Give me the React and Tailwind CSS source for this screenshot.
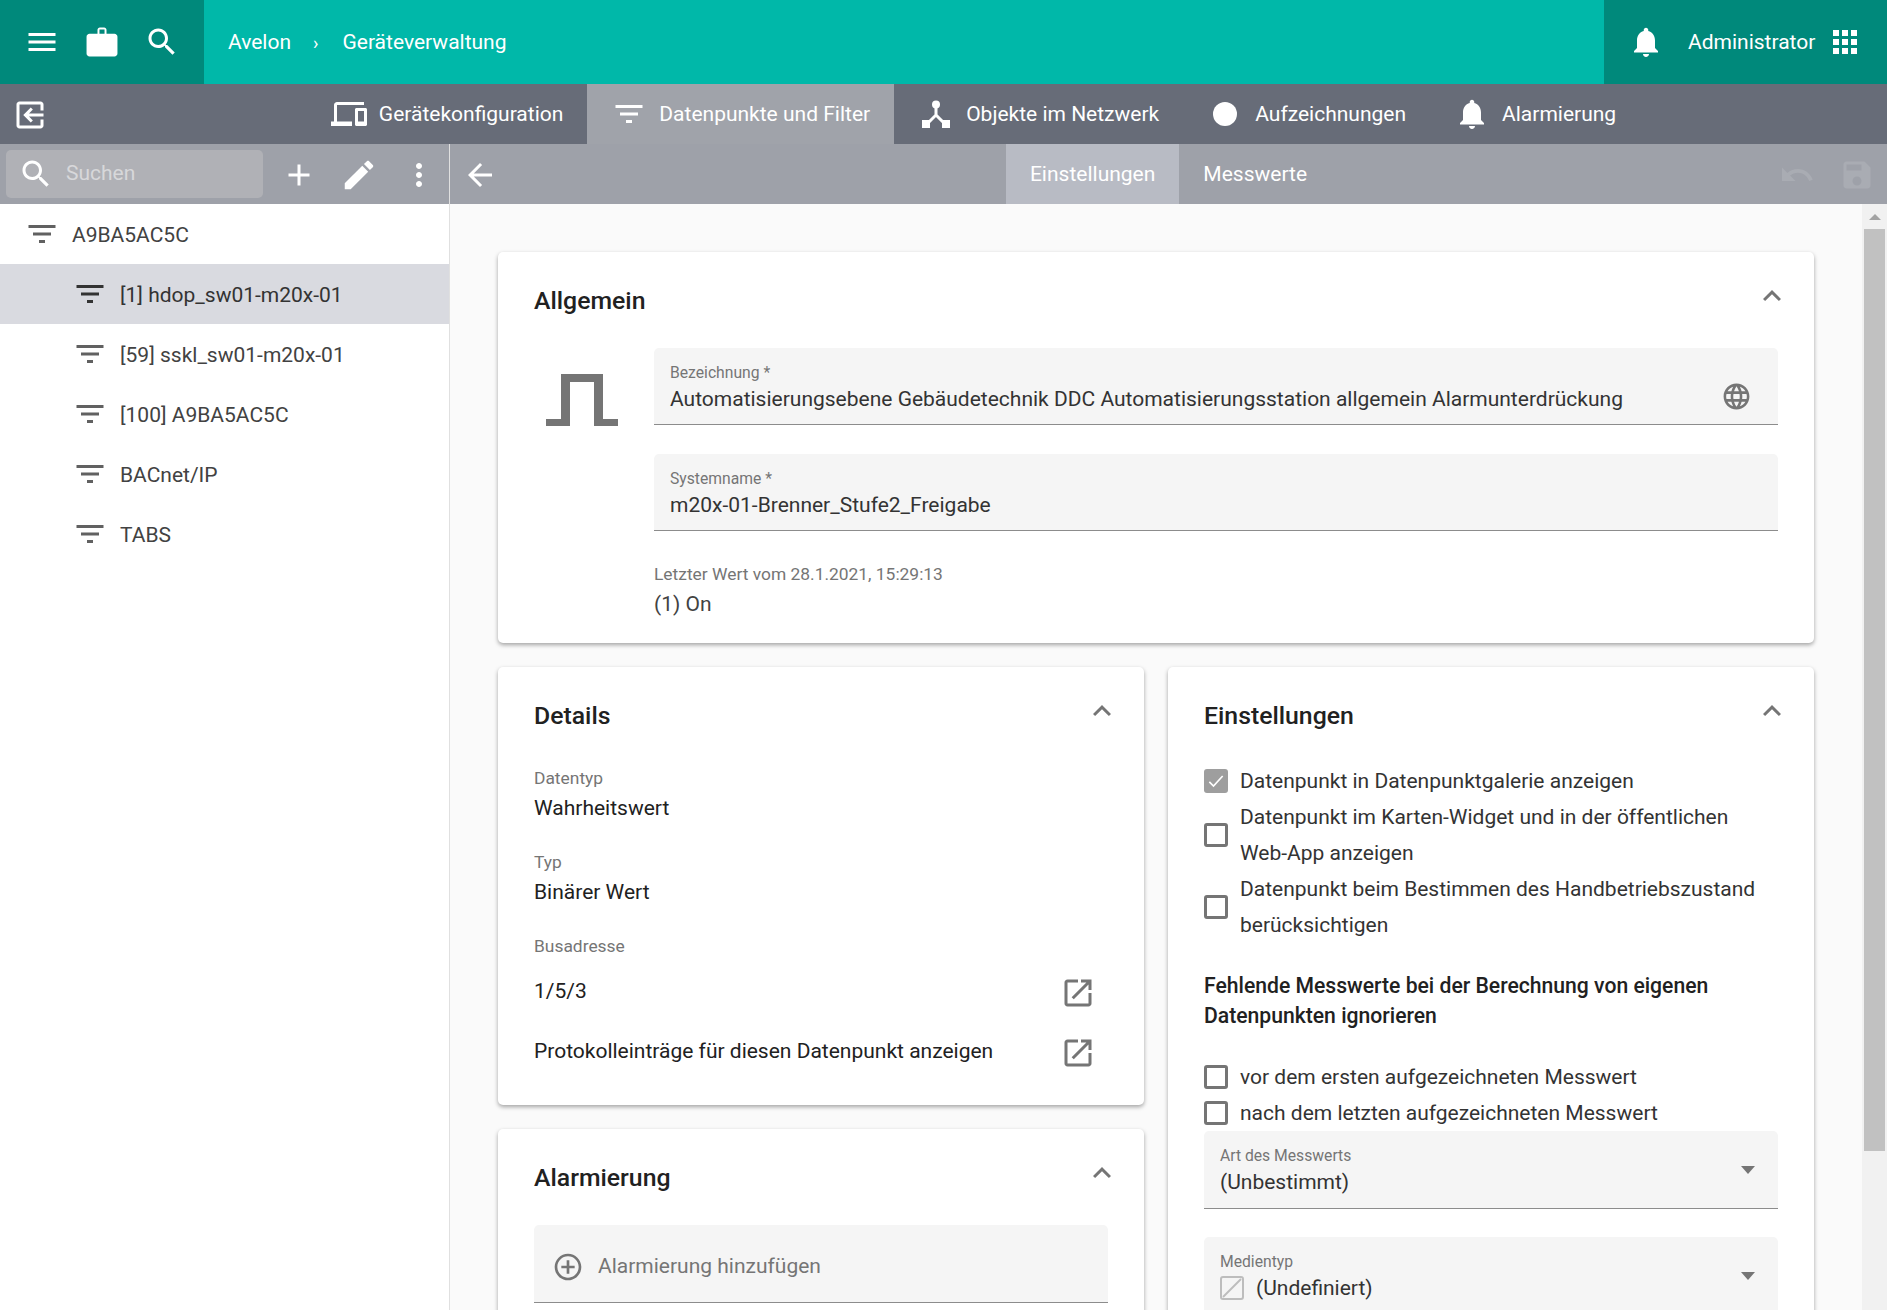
import React from "react";

const PATHS = {
  menu: "M3 18h18v-2H3v2zm0-5h18v-2H3v2zm0-7v2h18V6H3z",
  work: "M20.300 6.500H15V3.900c0-.9-.7-1.600-1.600-1.600h-2.800C9.700 2.300 9 3 9 3.900v2.600H3.700c-1.100 0-2 .9-2 2v11.200c0 1.100.9 2 2 2h16.600c1.100 0 2-.9 2-2V8.500c0-1.100-.9-2-2-2zM13.700 6.500h-3.400V3.700h3.400v2.800z",
  search: "M15.500 14h-.79l-.28-.27C15.410 12.590 16 11.110 16 9.500 16 5.910 13.090 3 9.500 3S3 5.910 3 9.500 5.910 16 9.500 16c1.610 0 3.090-.59 4.230-1.570l.27.28v.79l5 4.990L20.490 19l-4.990-5zm-6 0C7.010 14 5 11.990 5 9.500S7.010 5 9.500 5 14 7.010 14 9.500 11.990 14 9.500 14z",
  bell: "M12 22c1.100 0 2-.9 2-2h-4c0 1.100.89 2 2 2zm6-6v-5c0-3.070-1.640-5.640-4.500-6.320V4c0-.83-.67-1.500-1.500-1.500s-1.500.67-1.500 1.500v.68C7.630 5.360 6 7.920 6 11v5l-2 2v1h16v-1l-2-2z",
  apps: "M4 8h4V4H4v4zm6 12h4v-4h-4v4zm-6 0h4v-4H4v4zm0-6h4v-4H4v4zm6 0h4v-4h-4v4zm6-10v4h4V4h-4zm-6 4h4V4h-4v4zm6 6h4v-4h-4v4zm0 6h4v-4h-4v4z",
  exit: "M10.090 15.590L11.500 17l5-5-5-5-1.410 1.410L12.670 11H3v2h9.670l-2.580 2.590zM19 3H5c-1.110 0-2 .9-2 2v4h2V5h14v14H5v-4H3v4c0 1.100.89 2 2 2h14c1.100 0 2-.9 2-2V5c0-1.100-.9-2-2-2z",
  devices: "M4 6h18V4H4c-1.100 0-2 .9-2 2v11H0v3h14v-3H4V6zm19 2h-6c-.55 0-1 .45-1 1v10c0 .55.45 1 1 1h6c.55 0 1-.45 1-1V9c0-.55-.45-1-1-1zm-1 9h-4v-7h4v7z",
  filter: "M10 18h4v-2h-4v2zM3 6v2h18V6H3zm3 7h12v-2H6v2z",
  add: "M19 13h-6v6h-2v-6H5v-2h6V5h2v6h6v2z",
  edit: "M3 17.250V21h3.750L17.810 9.940l-3.750-3.750L3 17.250zM20.710 7.040c.39-.39.39-1.020 0-1.410l-2.340-2.340c-.39-.39-1.020-.39-1.410 0l-1.830 1.830 3.750 3.750 1.830-1.830z",
  more: "M12 8c1.100 0 2-.9 2-2s-.9-2-2-2-2 .9-2 2 .9 2 2 2zm0 2c-1.100 0-2 .9-2 2s.9 2 2 2 2-.9 2-2-.9-2-2-2zm0 6c-1.100 0-2 .9-2 2s.9 2 2 2 2-.9 2-2-.9-2-2-2z",
  back: "M20 11H7.830l5.590-5.590L12 4l-8 8 8 8 1.410-1.410L7.830 13H20v-2z",
  undo: "M12.500 8c-2.650 0-5.050.99-6.900 2.600L2 7v9h9l-3.620-3.620c1.390-1.160 3.160-1.880 5.120-1.880 3.540 0 6.550 2.310 7.600 5.500l2.370-.78C21.080 11.030 17.150 8 12.500 8z",
  save: "M17 3H5c-1.110 0-2 .9-2 2v14c0 1.100.89 2 2 2h14c1.100 0 2-.9 2-2V7l-4-4zm-5 16c-1.660 0-3-1.340-3-3s1.340-3 3-3 3 1.340 3 3-1.340 3-3 3zm3-10H5V5h10v4z",
  chevron: "M12 8l-6 6 1.410 1.410L12 10.830l4.590 4.580L18 14z",
  open: "M19 19H5V5h7V3H5c-1.110 0-2 .9-2 2v14c0 1.100.89 2 2 2h14c1.100 0 2-.9 2-2v-7h-2v7zM14 3v2h3.590l-9.830 9.830 1.410 1.410L19 6.410V10h2V3h-7z",
  plus: "M13 7h-2v4H7v2h4v4h2v-4h4v-2h-4V7zm-1-5C6.480 2 2 6.480 2 12s4.480 10 10 10 10-4.480 10-10S17.520 2 12 2zm0 18c-4.410 0-8-3.590-8-8s3.590-8 8-8 8 3.590 8 8-3.590 8-8 8z",
  globe: "M11.990 2C6.470 2 2 6.480 2 12s4.470 10 9.990 10C17.520 22 22 17.520 22 12S17.520 2 11.990 2zm6.930 6h-2.950c-.32-1.250-.78-2.450-1.380-3.560 1.840.63 3.370 1.910 4.330 3.560zM12 4.040c.83 1.200 1.480 2.530 1.910 3.960h-3.820c.43-1.430 1.080-2.760 1.910-3.960zM4.260 14C4.100 13.360 4 12.690 4 12s.1-1.360.26-2h3.380c-.08.66-.14 1.320-.14 2 0 .68.06 1.340.14 2H4.260zm.82 2h2.950c.32 1.250.78 2.450 1.380 3.560-1.840-.63-3.370-1.900-4.330-3.560zm2.950-8H5.080c.96-1.660 2.490-2.930 4.330-3.560C8.810 5.550 8.350 6.750 8.030 8zM12 19.960c-.83-1.200-1.480-2.530-1.910-3.960h3.820c-.43 1.430-1.080 2.760-1.910 3.960zM14.340 14H9.660c-.09-.66-.16-1.320-.16-2 0-.68.07-1.350.16-2h4.680c.09.65.16 1.320.16 2 0 .68-.07 1.340-.16 2zm.25 5.560c.6-1.110 1.060-2.310 1.380-3.560h2.950c-.96 1.650-2.490 2.930-4.330 3.560zM16.360 14c.08-.66.14-1.320.14-2 0-.68-.06-1.340-.14-2h3.380c.16.64.26 1.310.26 2s-.1 1.360-.26 2h-3.380z",
};

function Icon({ name, className = "size-9 fill-white" }) {
  return (
    <svg viewBox="0 0 24 24" className={`shrink-0 ${className}`}>
      <path d={PATHS[name]} />
    </svg>
  );
}

function NetworkIcon() {
  return (
    <svg viewBox="0 0 28 28" className="h-7 w-7 shrink-0 fill-white stroke-white">
      <circle cx="14" cy="4.500" r="4" stroke="none" />
      <path d="M14 7v8L5 24M14 15l9 9" fill="none" strokeWidth="3" />
      <rect x="0" y="20" width="8" height="8" stroke="none" />
      <rect x="20" y="20" width="8" height="8" stroke="none" />
    </svg>
  );
}

function PulseIcon() {
  return (
    <svg viewBox="0 0 72 52" className="ml-3 mt-[26px] h-[52px] w-[72px] fill-[#757575]">
      <path d="M0 52v-7h15V0h42v45h15v7H48V8H24v44H0z" />
    </svg>
  );
}

const TABS = [
  { label: "Gerätekonfiguration", icon: <Icon name="devices" /> },
  { label: "Datenpunkte und Filter", icon: <Icon name="filter" />, active: true },
  { label: "Objekte im Netzwerk", icon: <div className="flex size-9 items-center justify-center"><NetworkIcon /></div> },
  { label: "Aufzeichnungen", icon: <div className="flex size-9 items-center justify-center"><div className="size-6 rounded-full bg-white" /></div> },
  { label: "Alarmierung", icon: <Icon name="bell" /> },
];

const TREE = ["[1] hdop_sw01-m20x-01", "[59] sskl_sw01-m20x-01", "[100] A9BA5AC5C", "BACnet/IP", "TABS"];

function TopBar() {
  return (
    <header className="flex h-[84px] shrink-0 bg-[#00b8a9] text-white">
      <div className="flex w-[204px] items-center bg-[#00897b] pl-6">
        <Icon name="menu" />
        <Icon name="work" className="ml-6 size-9 fill-white" />
        <Icon name="search" className="ml-6 size-9 fill-white" />
      </div>
      <div className="flex flex-1 items-center pl-6 text-[21px]">
        <span className="pt-[1px]">Avelon</span>
        <span className="ml-[22px] text-[18px]">›</span>
        <span className="ml-[24px] pt-[1px]">Geräteverwaltung</span>
      </div>
      <div className="flex w-[283px] items-center bg-[#00897b] pl-[24px]">
        <Icon name="bell" />
        <span className="ml-6 pt-[1px] text-[21px]">Administrator</span>
        <Icon name="apps" className="ml-3 size-9 fill-white" />
      </div>
    </header>
  );
}

function NavBar() {
  return (
    <nav className="flex h-[60px] shrink-0 bg-[#676c78] text-white">
      <div className="flex w-[60px] items-center justify-center">
        <Icon name="exit" className="mt-[2px] size-9 -scale-x-100 fill-white" />
      </div>
      <div className="flex flex-1 justify-center">
        {TABS.map((t) => (
          <div key={t.label} className={`flex items-center gap-3 px-6 text-[21px] ${t.active ? "bg-[#a0a3aa]" : ""}`}>
            {t.icon}
            <span className="pt-[2px]">{t.label}</span>
          </div>
        ))}
      </div>
    </nav>
  );
}

function Sidebar() {
  return (
    <aside className="flex w-[450px] shrink-0 flex-col border-r border-[#e0e0e0] bg-white">
      <div className="flex h-[60px] shrink-0 items-center bg-[#9ea1a9] pl-[6px]">
        <div className="flex h-12 w-[257px] items-center rounded-[5px] bg-[#b0b1b6] pl-[12px] text-[21px] text-white/50">
          <Icon name="search" />
          <span className="ml-[12px]">Suchen</span>
        </div>
        <Icon name="add" className="ml-[18px] mt-[2px] size-9 fill-white" />
        <Icon name="edit" className="ml-[23px] mt-[2px] size-[38px] fill-white" />
        <Icon name="more" className="ml-[23px] mt-[2px] size-9 fill-white" />
      </div>
      <div className="flex h-[60px] items-center gap-3 pl-6 text-[21px] text-[#424242]">
        <Icon name="filter" className="size-9 fill-[#616161]" />
        <span className="pt-[3px]">A9BA5AC5C</span>
      </div>
      {TREE.map((t, i) => (
        <div key={t} className={`flex h-[60px] items-center gap-3 pl-[72px] text-[21px] ${i === 0 ? "bg-[#d9dae0] text-[#333333]" : "text-[#424242]"}`}>
          <Icon name="filter" className={`size-9 ${i === 0 ? "fill-[#333333]" : "fill-[#616161]"}`} />
          <span className="pt-[3px]">{t}</span>
        </div>
      ))}
    </aside>
  );
}

function Card({ title, children, className = "" }) {
  return (
    <section className={`rounded-[5px] bg-white shadow-[0_2px_4px_rgba(0,0,0,0.35)] ${className}`}>
      <div className="flex h-24 items-center justify-between pl-9 pr-6">
        <h2 className="pt-[2px] text-[24.800px] font-medium text-[#212121]">{title}</h2>
        <Icon name="chevron" className="mb-2 size-9 fill-[#757575]" />
      </div>
      {children}
    </section>
  );
}

function Field({ label, value, right, height = "h-[77px]", className = "" }) {
  return (
    <div className={`flex items-start justify-between rounded-t-[5px] border-b border-[#8c8c8c] bg-[#f5f5f5] pl-4 pr-4 pt-[15px] ${height} ${className}`}>
      <div>
        <div className="text-[15.700px] leading-5 text-[#757575]">{label}</div>
        <div className="text-[21px] leading-8 text-[#333333]">{value}</div>
      </div>
      {right}
    </div>
  );
}

function Caret() {
  return <div className="mr-[7px] mt-[20px] h-0 w-0 border-x-[7px] border-t-[8px] border-x-transparent border-t-[#757575]" />;
}

function Box({ checked }) {
  if (checked) {
    return (
      <div className="flex size-6 shrink-0 items-center justify-center rounded-[3px] bg-[#9e9e9e]">
        <svg viewBox="0 0 24 24" className="size-5 fill-none stroke-white stroke-2">
          <path d="M4 13l5 5L20 6" />
        </svg>
      </div>
    );
  }
  return <div className="size-6 shrink-0 rounded-[3px] border-[3px] border-[#757575]" />;
}

function Check({ checked, children }) {
  return (
    <div className="flex items-center gap-3 text-[21px] leading-9 text-[#333333]">
      <Box checked={checked} />
      <div>{children}</div>
    </div>
  );
}

function Info({ label, value }) {
  return (
    <div className="h-[84px]">
      <div className="text-[17.400px] leading-[30px] text-[#757575]">{label}</div>
      <div className="text-[21px] leading-[30px] text-[#212121]">{value}</div>
    </div>
  );
}

function LinkRow({ text }) {
  return (
    <div className="flex h-[60px] items-center justify-between pr-[48px] text-[21px] text-[#212121]">
      <span className="pt-[2px]">{text}</span>
      <Icon name="open" className="mt-1 size-9 fill-[#757575]" />
    </div>
  );
}

function Content() {
  return (
    <main className="min-w-0 flex-1 overflow-hidden bg-[#fafafa] px-12 pt-12">
      <Card title="Allgemein" className="h-[391px]">
        <div className="flex pr-9">
          <div className="w-[156px] pl-9 shrink-0">
            <PulseIcon />
          </div>
          <div className="flex-1">
            <Field
              label="Bezeichnung *"
              value="Automatisierungsebene Gebäudetechnik DDC Automatisierungsstation allgemein Alarmunterdrückung"
              right={<Icon name="globe" className="mr-[10px] mt-[18px] size-[31px] fill-[#757575]" />}
            />
            <Field label="Systemname *" value="m20x-01-Brenner_Stufe2_Freigabe" className="mt-[29px]" />
            <div className="mt-7 text-[17.400px] leading-[30px] text-[#757575]">Letzter Wert vom 28.1.2021, 15:29:13</div>
            <div className="text-[21px] leading-[30px] text-[#424242]">(1) On</div>
          </div>
        </div>
      </Card>
      <div className="mt-6 grid grid-cols-2 gap-6">
        <div>
          <Card title="Details" className="h-[438px]">
            <div className="pl-9">
              <Info label="Datentyp" value="Wahrheitswert" />
              <Info label="Typ" value="Binärer Wert" />
              <div className="text-[17.400px] leading-[30px] text-[#757575]">Busadresse</div>
              <LinkRow text="1/5/3" />
              <LinkRow text="Protokolleinträge für diesen Datenpunkt anzeigen" />
            </div>
          </Card>
          <Card title="Alarmierung" className="mt-6 h-[300px]">
            <div className="mx-9 flex h-[78px] items-center rounded-t-[5px] border-b border-[#8c8c8c] bg-[#f5f5f5] pl-[18px] pt-[7px] text-[21px] text-[#757575]">
              <Icon name="plus" className="size-8 fill-[#757575]" />
              <span className="ml-[14px]">Alarmierung hinzufügen</span>
            </div>
          </Card>
        </div>
        <Card title="Einstellungen" className="h-[700px]">
          <div className="px-9">
            <Check checked>Datenpunkt in Datenpunktgalerie anzeigen</Check>
            <Check>Datenpunkt im Karten-Widget und in der öffentlichen Web-App anzeigen</Check>
            <Check>Datenpunkt beim Bestimmen des Handbetriebszustand berücksichtigen</Check>
            <h3 className="mb-[28px] mt-7 text-[21.150px] font-medium leading-[30px] text-[#212121]">
              Fehlende Messwerte bei der Berechnung von eigenen Datenpunkten ignorieren
            </h3>
            <Check>vor dem ersten aufgezeichneten Messwert</Check>
            <Check>nach dem letzten aufgezeichneten Messwert</Check>
            <Field label="Art des Messwerts" value="(Unbestimmt)" right={<Caret />} height="h-[78px]" />
            <div className="mt-7 flex h-[100px] items-start justify-between rounded-t-[5px] bg-[#f5f5f5] pl-4 pr-4 pt-[15px]">
              <div>
                <div className="text-[15.700px] leading-5 text-[#757575]">Medientyp</div>
                <div className="flex items-center gap-3 text-[21px] leading-8 text-[#333333]">
                  <svg viewBox="0 0 24 24" className="size-6 fill-none stroke-[#bdbdbd] stroke-2">
                    <rect x="1" y="1" width="22" height="22" rx="2" />
                    <path d="M3 21L21 3" />
                  </svg>
                  <span>(Undefiniert)</span>
                </div>
              </div>
              <Caret />
            </div>
          </div>
        </Card>
      </div>
    </main>
  );
}

function Scrollbar() {
  return (
    <div className="flex w-[25px] shrink-0 flex-col items-center bg-[#f1f1f1]">
      <div className="mt-[10px] h-0 w-0 border-x-[6px] border-b-[6px] border-x-transparent border-b-[#a3a3a3]" />
      <div className="mt-[9px] h-[922px] w-[21px] bg-[#c1c1c1]" />
    </div>
  );
}

export default function App() {
  return (
    <div className="flex h-screen flex-col overflow-hidden bg-white font-[Roboto,sans-serif]">
      <TopBar />
      <NavBar />
      <div className="flex min-h-0 flex-1">
        <Sidebar />
        <div className="flex min-w-0 flex-1 flex-col">
          <div className="grid h-[60px] shrink-0 grid-cols-[1fr_auto_1fr] bg-[#9ea1a9] text-[21px] text-white">
            <div className="flex items-center pl-3 pt-[2px]">
              <Icon name="back" />
            </div>
            <div className="flex">
              <div className="flex items-center bg-[#b8bbc4] px-6 pt-[2px]">Einstellungen</div>
              <div className="flex items-center px-6 pt-[2px]">Messwerte</div>
            </div>
            <div className="flex items-center justify-end gap-6 pr-3 pt-[2px]">
              <Icon name="undo" className="size-9 fill-[#a9acb3]" />
              <Icon name="save" className="size-9 fill-[#a9acb3]" />
            </div>
          </div>
          <div className="flex min-h-0 flex-1">
            <Content />
            <Scrollbar />
          </div>
        </div>
      </div>
    </div>
  );
}
